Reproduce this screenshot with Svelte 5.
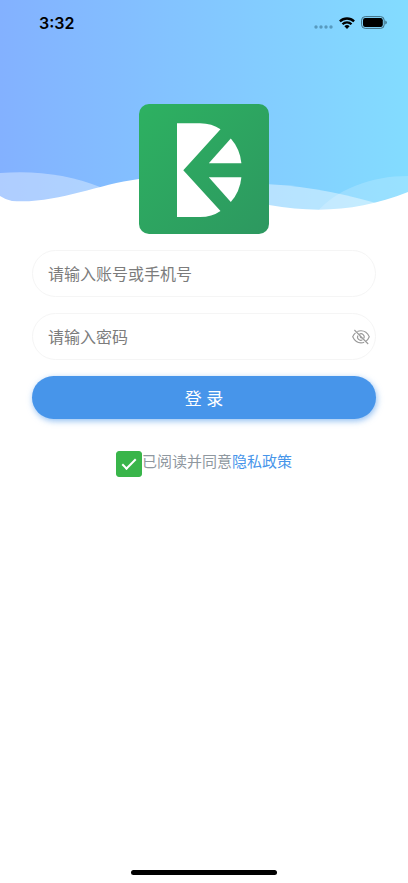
<script lang="ts">
    let account = $state("");
    let password = $state("");
    let showPassword = $state(false);
    let agreed = $state(true);

    function login(e: SubmitEvent) {
        e.preventDefault();
    }
</script>

<div class="page">
    <header>
        <svg class="waves" viewBox="0 0 408 214" preserveAspectRatio="none" aria-hidden="true">
            <defs>
                <linearGradient id="sky">
                    <stop offset="0" stop-color="#83b1ff" />
                    <stop offset="1" stop-color="#83dcff" />
                </linearGradient>
            </defs>
            <rect width="408" height="214" fill="url(#sky)" />
            <path d="M0 173C35 170 72 175 100 187L80 214H0Z" fill="#fff" opacity=".36" />
            <path d="M220 184C270 181 325 188 376 203L350 214H220Z" fill="#fff" opacity=".42" />
            <path d="M315 214C336 189 371 176 408 176V214Z" fill="#fff" opacity=".18" />
            <path d="M0 196Q6 200 12 201C57 204 94 185 139 179C192 172 218 196 269 205C320 214 362 210 408 192V214H0Z" fill="#fff" />
        </svg>

        <div class="status">
            <time>3:32</time>
            <div class="indicators">
                <svg width="20" height="6" viewBox="0 0 20 6" aria-hidden="true">
                    <g fill="#579abf">
                        <circle cx="2" cy="4" r="1.7" />
                        <circle cx="7" cy="4" r="1.7" />
                        <circle cx="12" cy="4" r="1.7" />
                        <circle cx="17" cy="4" r="1.7" />
                    </g>
                </svg>
                <svg class="wifi" width="16" height="12" viewBox="0 0 16 12" aria-hidden="true">
                    <g fill="none" stroke="#000" stroke-width="2.3">
                        <path d="M.9 4.4a10.2 10.2 0 0 1 14.2 0" />
                        <path d="M3.5 7.2a6.4 6.4 0 0 1 9 0" />
                    </g>
                    <path d="M5.4 9.3a3.8 3.8 0 0 1 5.2 0L8 12Z" />
                </svg>
                <svg width="26" height="13" viewBox="0 0 26 13" aria-hidden="true">
                    <rect x=".6" y=".6" width="22.6" height="11.8" rx="3.6" fill="none" stroke="#3f6d82" />
                    <rect x="2" y="2" width="19.8" height="9" rx="2.2" />
                    <path d="M24.3 4.6q1.5.5 1.5 1.9t-1.5 1.9Z" fill="#3f6d82" />
                </svg>
            </div>
        </div>

        <svg class="logo" viewBox="0 0 130 130" role="img" aria-label="Logo">
            <defs>
                <linearGradient id="green" x1="0" y1="0" x2="1" y2="1">
                    <stop offset="0" stop-color="#2db161" />
                    <stop offset="1" stop-color="#2d9860" />
                </linearGradient>
            </defs>
            <rect width="130" height="130" rx="10" fill="url(#green)" />
            <g fill="#fff">
                <path d="M38 19.3H61Q73 19.3 81.5 25.3L44.3 66.3L81.5 107Q73 113 61 113H38Z" />
                <path d="M91.8 34.6Q101 45 102.4 59.2H69.8Z" />
                <path d="M69.8 73.2H102.4Q101 87.5 91.8 98Z" />
            </g>
        </svg>
    </header>

    <form onsubmit={login}>
        <div class="field">
            <input type="text" placeholder="请输入账号或手机号" aria-label="账号或手机号" bind:value={account} />
        </div>
        <div class="field">
            <input type={showPassword ? "text" : "password"} placeholder="请输入密码" aria-label="密码" bind:value={password} />
            <button class="eye" type="button" aria-label="显示密码" aria-pressed={showPassword} onclick={() => (showPassword = !showPassword)}>
                <svg width="18" height="16" viewBox="0 0 18 16" fill="none" stroke="#999" stroke-width="1.1" aria-hidden="true">
                    <path d="M5.3 2.6Q7 1.8 9 1.8C13 1.8 15.7 4.3 17.3 7.8Q16.2 10.5 14.1 12.1" />
                    <path d="M12.2 13.2Q10.7 13.9 9 13.9C5 13.9 2.3 11.3.7 7.8Q1.7 5.3 3.5 3.8" />
                    <path d="M7.2 5.4A3.1 3.1 0 0 1 11.7 9.5M10.5 10.6A3.1 3.1 0 0 1 6 6.5" />
                    <path d="M8.3 7.1A1.3 1.3 0 0 0 9.8 8.8M2.4 1L16.2 15" />
                </svg>
            </button>
        </div>
        <button class="login" type="submit">登 录</button>
        <div class="agreement">
            <input id="agree" type="checkbox" bind:checked={agreed} />
            <label for="agree">已阅读并同意</label><a href="#privacy">隐私政策</a>
        </div>
    </form>

    <div class="home-bar"></div>
</div>

<style>
    :global(body) {
        margin: 0;
        background: #fff;
    }
    .page {
        box-sizing: border-box;
        min-height: 100vh;
        display: flex;
        flex-direction: column;
        font-family: "Liberation Sans", "Noto Sans CJK SC", sans-serif;
    }
    header {
        position: relative;
        display: flex;
        flex-direction: column;
        align-items: center;
    }
    .waves {
        position: absolute;
        top: 0;
        left: 0;
        width: 100%;
        height: 214px;
    }
    .status {
        position: relative;
        box-sizing: border-box;
        align-self: stretch;
        display: flex;
        align-items: center;
        justify-content: space-between;
        height: 45px;
        padding: 0 21px 0 39px;
    }
    time {
        font-family: Inter, sans-serif;
        font-size: 16px;
        font-weight: 600;
    }
    .indicators {
        display: flex;
        align-items: center;
    }
    .wifi {
        margin: 0 6px 0 5px;
    }
    .indicators svg:first-child {
        margin-top: 6px;
    }
    .logo {
        position: relative;
        width: 130px;
        height: 130px;
        margin-top: 59px;
    }
    form {
        display: flex;
        flex-direction: column;
        gap: 16px;
        padding: 16px 32px;
    }
    input, button {
        font: inherit;
        margin: 0;
    }
    .field {
        box-sizing: border-box;
        display: flex;
        align-items: center;
        height: 47px;
        padding: 0 5px 0 15px;
        border: 1px solid #f5f5f5;
        border-radius: 24px;
        background: #fff;
        font-size: 16px;
    }
    .field input {
        flex: 1;
        min-width: 0;
        padding: 2px 0 0;
        border: none;
        background: none;
        outline: none;
    }
    input::placeholder {
        color: #7c7c7c;
        opacity: 1;
    }
    .eye {
        display: flex;
        padding: 0;
        border: none;
        background: none;
    }
    .login {
        height: 43px;
        border: none;
        border-radius: 22px;
        background: #4795ea;
        box-shadow: 1px 2px 6px rgba(71, 149, 234, 0.6);
        color: #fff;
        font-size: 17px;
    }
    .agreement {
        display: flex;
        justify-content: center;
        margin-top: 16px;
        font-size: 15px;
        line-height: 22px;
        color: #8f98a0;
    }
    .agreement input {
        appearance: none;
        display: grid;
        place-items: center;
        width: 26px;
        height: 26px;
        border: 1px solid #39b54a;
        border-radius: 3px;
    }
    .agreement input:checked {
        background: #39b54a;
    }
    .agreement input:checked::before {
        content: "";
        width: 14px;
        height: 7px;
        margin-bottom: 3px;
        border: solid #fff;
        border-width: 0 0 2px 2px;
        box-sizing: border-box;
        transform: rotate(-45deg);
    }
    .agreement a {
        color: #4795ea;
        text-decoration: none;
    }
    .home-bar {
        width: 146px;
        height: 5px;
        margin: auto auto 8px;
        border-radius: 3px;
        background: #000;
    }
</style>
